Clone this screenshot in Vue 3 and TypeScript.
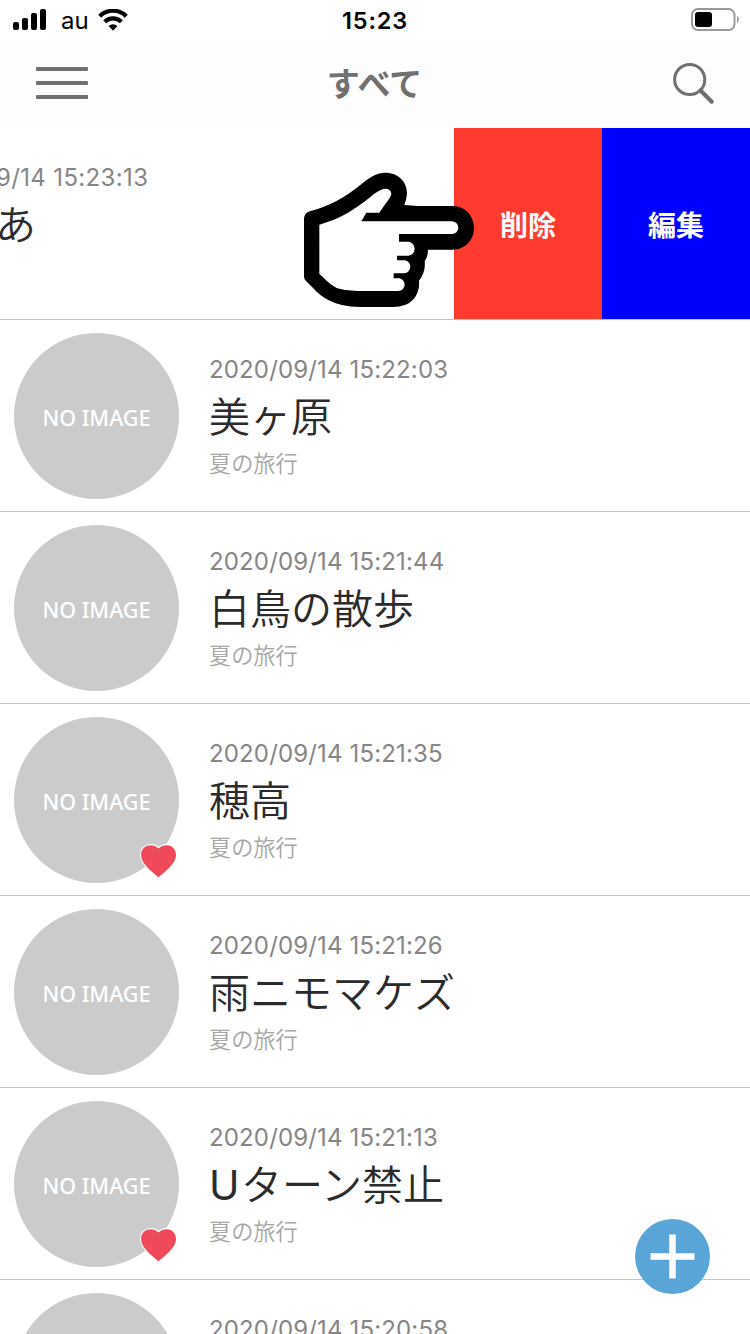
<script setup lang="ts">
interface Entry {
  date: string
  latin?: string
  title: string
  category: string
  liked: boolean
}

const category = '夏の旅行'
const entries: Entry[] = [
  { date: '2020/09/14 15:22:03', title: '美ヶ原', category, liked: false },
  { date: '2020/09/14 15:21:44', title: '白鳥の散歩', category, liked: false },
  { date: '2020/09/14 15:21:35', title: '穂高', category, liked: true },
  { date: '2020/09/14 15:21:26', title: '雨ニモマケズ', category, liked: false },
  { date: '2020/09/14 15:21:13', latin: 'U', title: 'ターン禁止', category, liked: true },
  { date: '2020/09/14 15:20:58', title: '', category: '', liked: false },
]
</script>

<template>
  <div class="screen">
    <header class="top">
      <div class="status">
        <div class="status-left">
          <svg class="signal" width="34" height="22" viewBox="0 0 34 22">
            <rect x="0" y="13" width="6" height="8" rx="2" />
            <rect x="9" y="9" width="6" height="12" rx="2" />
            <rect x="18" y="4" width="6" height="17" rx="2" />
            <rect x="27" y="0" width="6" height="21" rx="2" />
          </svg>
          <span class="carrier">au</span>
          <svg class="wifi" width="30" height="22" viewBox="0 0 30 22">
            <path d="M1.7 7.2a19 19 0 0 1 26.6 0" fill="none" stroke="#000" stroke-width="4.2" />
            <path d="M6.7 12.7a11.9 11.9 0 0 1 16.6 0" fill="none" stroke="#000" stroke-width="4.2" />
            <path d="M10.6 17.1Q15 13.5 19.4 17.1L15 21.7Z" />
          </svg>
        </div>
        <span class="clock">15:23</span>
        <svg class="battery" width="49" height="24" viewBox="0 0 49 24">
          <rect x="1" y="1.1" width="42.5" height="21" rx="6" fill="none" stroke="#999" stroke-width="2" />
          <rect x="4" y="4" width="17" height="15" rx="3" />
          <path d="M46 7.5Q49.5 11.5 46 15.5Z" fill="#999" />
        </svg>
      </div>
      <div class="nav">
        <div class="menu"><i></i><i></i><i></i></div>
        <h1>すべて</h1>
        <svg class="search" width="44" height="44" viewBox="0 0 44 44" fill="none" stroke="#707070">
          <circle cx="17.7" cy="17.5" r="15.1" stroke-width="3" />
          <path d="M28.5 28.5L39.7 39.7" stroke-width="4.2" stroke-linecap="round" />
        </svg>
      </div>
    </header>

    <main>
      <section class="row swiped">
        <div class="slid">
          <p class="date">9/14 15:23:13</p>
          <p class="title">あ</p>
        </div>
        <div class="actions">
          <button class="remove">削除</button>
          <button class="edit">編集</button>
        </div>
        <svg class="hand" width="200" height="160" viewBox="0 0 600 480">
          <path d="M42 174Q44 157 62 153C120 137 165 112 212 74C240 50 262 38 286 38C325 38 351 65 351 100Q350 118 343 135L382 138H488C525 138 552 168 552 204C552 240 525 269 488 269H414Q414 290 404 304Q408 335 387 362Q390 395 371 417Q350 441 308 441H210Q150 440 115 420Q90 408 70 385L48 363Q42 358 42 350Z" />
          <path fill="#fff" d="M88 194C150 178 195 148 240 112Q268 86 288 86Q304 88 304 102Q303 110 291 125Q280 140 268 158H229L214 184H486Q505 187 505 204Q503 221 486 222H327V245H357Q373 250 374 266Q372 285 355 287H321V301H345Q361 306 361 320Q359 338 343 340H311V355H330Q344 362 344 375Q342 392 325 393H204Q160 391 140 384Q122 376 105 358Q98 350 88 342Z" />
        </svg>
      </section>

      <section v-for="entry in entries" :key="entry.date" class="row">
        <div class="avatar">
          <span>NO IMAGE</span>
          <svg v-if="entry.liked" class="heart" width="40" height="38" viewBox="0 0 40 38">
            <path d="M19.5 34.5C14 29 2 21.5 2 12C2 1.5 14 -.5 19.5 5.5C25 -.5 37 1.5 37 12C37 21.5 25 29 19.5 34.5Z" fill="#ef4a59" stroke="#fff" stroke-width="2" paint-order="stroke" />
          </svg>
        </div>
        <div class="info">
          <p class="date">{{ entry.date }}</p>
          <p class="title"><span v-if="entry.latin" class="latin">{{ entry.latin }}</span>{{ entry.title }}</p>
          <p class="category">{{ entry.category }}</p>
        </div>
      </section>
    </main>

    <button class="add" aria-label="追加">
      <svg width="75" height="75" viewBox="0 0 75 75">
        <path d="M37.5 15.5V59.5M15.5 37.5H59.5" stroke="#fff" stroke-width="6.5" />
      </svg>
    </button>
  </div>
</template>

<style>
body {
  margin: 0;
  overflow: hidden;
}
</style>

<style scoped>
.screen {
  position: relative;
  width: 750px;
  height: 1334px;
  overflow: hidden;
  background: #fff;
  font-family: Inter, "Noto Sans CJK JP", sans-serif;
}
p, h1 { margin: 0; white-space: nowrap; }
.top { height: 128px; background: #fdfdfd; }
.status {
  display: grid;
  grid-template-columns: 1fr auto 1fr;
  align-items: center;
  height: 40px;
  box-sizing: border-box;
  padding: 0 10px 0 13px;
  background: #fff;
}
.status-left { display: flex; align-items: center; height: 38px; }
.carrier { margin-left: 14px; font-size: 24px; line-height: 38px; padding-top: 2px; }
.wifi { margin-left: 9px; }
.clock { margin-right: 3px; padding-top: 2px; font-size: 23.5px; font-weight: 600; letter-spacing: 0.8px; line-height: 38px; }
.battery { justify-self: end; margin-top: -1px; }
.nav {
  display: grid;
  grid-template-columns: 1fr auto 1fr;
  align-items: center;
  height: 86px;
  padding: 0 34px 0 36px;
}
.menu { display: flex; flex-direction: column; gap: 10px; width: 52px; }
.menu i { height: 4px; background: #707070; border-radius: 1px; }
h1 { margin-right: 3px; padding-top: 3px; color: #707070; font-size: 33px; font-weight: 700; line-height: 41px; }
.search { justify-self: end; margin-top: 2px; }
.row {
  display: flex;
  height: 192px;
  box-sizing: border-box;
  border-bottom: 1px solid #c4c4c6;
}
.swiped { position: relative; justify-content: space-between; }
.slid { padding-top: 36px; margin-left: -4px; }
.slid .title { margin-left: -1px; }
.slid .date { letter-spacing: 0.35px; }
.actions { display: flex; height: 191px; }
.actions button {
  width: 148px;
  border: 0;
  padding: 0;
  color: #fff;
  font: 700 28px/40px "Noto Sans CJK JP", sans-serif;
}
.remove { background: #ff3b30; }
.edit { background: #00f; }
.hand { position: absolute; left: 290px; top: 32px; }
.avatar {
  position: relative;
  display: flex;
  align-items: center;
  justify-content: center;
  width: 165px;
  height: 166px;
  margin: 13px 0 0 14px;
  border-radius: 50%;
  background: #cbcbcb;
  color: #fff;
  font: 500 21.6px/30px "Noto Sans", sans-serif;
}
.avatar span { padding-top: 3px; }
.heart { position: absolute; left: 125px; top: 126px; }
.info { margin-left: 30px; padding-top: 36px; }
.date { color: #868686; font-size: 24px; line-height: 28px; letter-spacing: 0.15px; }
.title {
  height: 60px;
  margin-top: 3px;
  color: #2b2b2b;
  font-size: 41px;
  font-weight: 350;
  line-height: 60px;
}
.latin { margin-right: 1.5px; font-weight: 400; }
.category { margin-top: 1px; color: #a6a6a6; font-size: 22.2px; font-weight: 350; line-height: 32px; }
.add {
  position: absolute;
  left: 635px;
  top: 1219px;
  width: 75px;
  height: 75px;
  padding: 0;
  border: 0;
  border-radius: 50%;
  background: #59a5d8;
}
.add svg { display: block; }
</style>
